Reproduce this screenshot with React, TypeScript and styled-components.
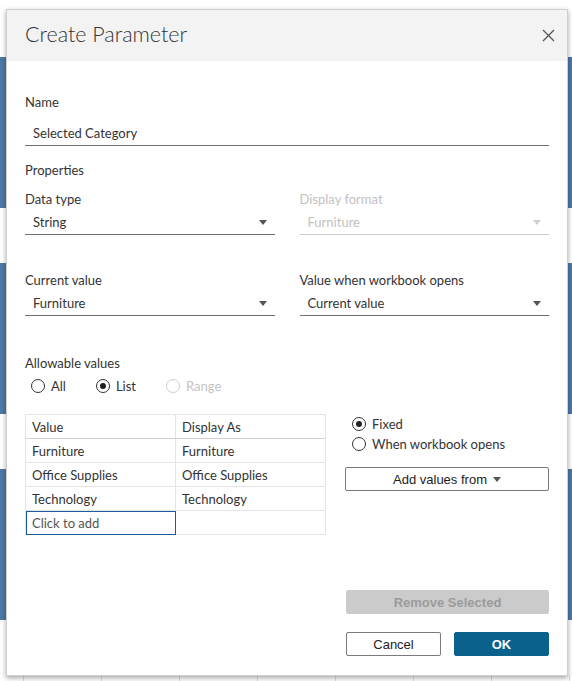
import styled, { createGlobalStyle } from "styled-components";

const Global = createGlobalStyle`
  html, body {
    margin: 0;
    padding: 0;
    background: #ffffff;
  }
  body {
    font-family: Lato, "Open Sans", "Liberation Sans", sans-serif;
    color: #333333;
  }
  * { box-sizing: border-box; }
`;

const Page = styled.div`
  position: relative;
  width: 572px;
  height: 681px;
  overflow: hidden;
`;

// the workbook view behind the modal
const Backdrop = styled.div`
  display: flex;
  flex-direction: column;
  gap: 55px;
  height: 100%;
  padding-top: 57px;
`;

const Bar = styled.div`
  height: ${p => p.$h}px;
  background: #4e78a6;
`;

const Axis = styled.div`
  margin-top: auto;
  height: 6px;
  display: flex;
  padding-left: 23px;
  & > span {
    width: 78px;
    flex: none;
    border-left: 1px solid #dcdcdc;
  }
`;

const Dialog = styled.div`
  position: absolute;
  left: 6px;
  top: 9px;
  width: 562px;
  height: 667px;
  background: #ffffff;
  border: 1px solid #cfcfcf;
  box-shadow: 0 2px 5px rgba(0, 0, 0, 0.35);
  display: flex;
  flex-direction: column;
`;

const Header = styled.header`
  height: 51px;
  flex: none;
  background: #f3f3f3;
  display: flex;
  align-items: center;
  justify-content: space-between;
  padding: 0 8px 4px 18px;

  & h1 {
    margin: 0;
    font-size: 21.5px;
    font-weight: 300;
    color: #333;
  }
`;

const CloseButton = styled.button`
  border: none;
  background: transparent;
  padding: 4px;
  margin-top: 3px;
  display: flex;
  cursor: pointer;
`;

const Body = styled.div`
  flex: 1;
  display: flex;
  flex-direction: column;
  padding: 33px 18px 19px;
`;

const Label = styled.div`
  font-size: 13px;
  line-height: 16px;
  color: ${p => (p.$disabled ? "#c2c2c2" : "#333")};
  margin-top: ${p => p.$mt ?? 0}px;
`;

const TextInput = styled.div`
  margin-top: ${p => p.$mt ?? 3}px;
  height: 25px;
  padding: 0 8px;
  display: flex;
  align-items: center;
  font-size: 13px;
  color: #333;
  border-bottom: 1px solid #6f6f6f;
`;

const Columns = styled.div`
  display: grid;
  grid-template-columns: 1fr 1fr;
  column-gap: 25px;
  margin-top: ${p => p.$mt}px;
`;

const Select = styled.div`
  margin-top: 3px;
  height: 25px;
  padding: 0 8px;
  display: flex;
  align-items: center;
  justify-content: space-between;
  font-size: 13px;
  color: ${p => (p.$disabled ? "#c2c2c2" : "#333")};
  border-bottom: 1px solid ${p => (p.$disabled ? "#cccccc" : "#6f6f6f")};
`;

const Caret = styled.span`
  width: 0;
  height: 0;
  border-left: 4.5px solid transparent;
  border-right: 4.5px solid transparent;
  border-top: 5px solid ${p => (p.$disabled ? "#cfcfcf" : "#555")};
`;

const RadioRow = styled.div`
  display: flex;
  flex-direction: ${p => (p.$vertical ? "column" : "row")};
  gap: ${p => (p.$vertical ? 4 : 30)}px;
  padding-left: ${p => p.$pl}px;
  margin-top: ${p => p.$mt ?? 0}px;
`;

const RadioItem = styled.label`
  display: flex;
  align-items: center;
  gap: 6px;
  font-size: 13px;
  line-height: 16px;
  color: ${p => (p.$disabled ? "#c4c4c4" : "#333")};
`;

const Circle = styled.span`
  width: 14px;
  height: 14px;
  border-radius: 50%;
  border: 1px solid ${p => (p.$disabled ? "#d0d0d0" : "#333")};
  display: flex;
  align-items: center;
  justify-content: center;
  &::after {
    content: "";
    width: 6px;
    height: 6px;
    border-radius: 50%;
    background: ${p => (p.$checked ? "#222" : "transparent")};
  }
`;

const ListArea = styled.div`
  display: flex;
  gap: 19px;
  margin-top: 20px;
`;

const Table = styled.table`
  border-collapse: collapse;
  width: 301px;
  font-size: 13px;
  color: #333;
  flex: none;

  & td {
    width: 50%;
    height: 24px;
    padding: 0 6px;
    border: 1px solid #e4e4e4;
  }
  & tr:first-child td {
    border-bottom-color: #d2d2d2;
  }
  & td.editing {
    outline: 1px solid #1a5c9e;
    outline-offset: -1px;
    color: #555;
  }
`;

const SidePanel = styled.div`
  flex: 1;
  display: flex;
  flex-direction: column;
  padding-top: 2px;
`;

const Button = styled.button`
  height: 24px;
  width: ${p => p.$w ?? "100%"};
  border-radius: 2px;
  font-family: "Liberation Sans", Arial, sans-serif;
  font-size: 13px;
  font-weight: ${p => (p.$variant ? 700 : 400)};
  display: flex;
  align-items: center;
  justify-content: center;
  gap: 6px;
  cursor: pointer;
  border: 1px solid ${p => (p.$variant === "primary" ? "#0a628c" : p.$variant === "disabled" ? "#cbcbcb" : "#7a7a7a")};
  background: ${p => (p.$variant === "primary" ? "#0a628c" : p.$variant === "disabled" ? "#cbcbcb" : "#fff")};
  color: ${p => (p.$variant === "primary" ? "#fff" : p.$variant === "disabled" ? "#9b9b9b" : "#222")};
  margin-top: ${p => p.$mt ?? 0}px;
`;

const Footer = styled.div`
  margin-top: auto;
  align-self: flex-end;
  width: 203px;
  display: flex;
  flex-direction: column;
  gap: 18px;
`;

const ButtonRow = styled.div`
  display: flex;
  justify-content: space-between;
`;

const rows = [
  ["Value", "Display As"],
  ["Furniture", "Furniture"],
  ["Office Supplies", "Office Supplies"],
  ["Technology", "Technology"],
];

export default function App() {
  return (
    <Page>
      <Global />
      <Backdrop>
        <Bar $h={163} />
        <Bar $h={163} />
        <Bar $h={164} />
        <Axis>
          {Array.from({ length: 8 }).map((_, i) => (
            <span key={i} />
          ))}
        </Axis>
      </Backdrop>

      <Dialog>
        <Header>
          <h1>Create Parameter</h1>
          <CloseButton aria-label="Close">
            <svg width="13" height="13" viewBox="0 0 13 13">
              <path d="M1 1 L12 12 M12 1 L1 12" stroke="#555" strokeWidth="1.3" fill="none" />
            </svg>
          </CloseButton>
        </Header>

        <Body>
          <Label>Name</Label>
          <TextInput $mt={11}>Selected Category</TextInput>

          <Label $mt={16}>Properties</Label>
          <Columns $mt={13}>
            <div>
              <Label>Data type</Label>
              <Select>
                String
                <Caret />
              </Select>
            </div>
            <div>
              <Label $disabled>Display format</Label>
              <Select $disabled>
                Furniture
                <Caret $disabled />
              </Select>
            </div>
          </Columns>

          <Columns $mt={37}>
            <div>
              <Label>Current value</Label>
              <Select>
                Furniture
                <Caret />
              </Select>
            </div>
            <div>
              <Label>Value when workbook opens</Label>
              <Select>
                Current value
                <Caret />
              </Select>
            </div>
          </Columns>

          <Label $mt={39}>Allowable values</Label>
          <RadioRow $pl={6} $mt={7}>
            <RadioItem>
              <Circle />
              All
            </RadioItem>
            <RadioItem>
              <Circle $checked />
              List
            </RadioItem>
            <RadioItem $disabled>
              <Circle $disabled />
              Range
            </RadioItem>
          </RadioRow>

          <ListArea>
            <Table>
              <tbody>
                {rows.map(r => (
                  <tr key={r[0]}>
                    <td>{r[0]}</td>
                    <td>{r[1]}</td>
                  </tr>
                ))}
                <tr>
                  <td className="editing">Click to add</td>
                  <td />
                </tr>
              </tbody>
            </Table>
            <SidePanel>
              <RadioRow $vertical $pl={7}>
                <RadioItem>
                  <Circle $checked />
                  Fixed
                </RadioItem>
                <RadioItem>
                  <Circle />
                  When workbook opens
                </RadioItem>
              </RadioRow>
              <Button $mt={15}>
                Add values from
                <Caret />
              </Button>
            </SidePanel>
          </ListArea>

          <Footer>
            <Button $variant="disabled">Remove Selected</Button>
            <ButtonRow>
              <Button $w="95px">Cancel</Button>
              <Button $w="95px" $variant="primary">
                OK
              </Button>
            </ButtonRow>
          </Footer>
        </Body>
      </Dialog>
    </Page>
  );
}
